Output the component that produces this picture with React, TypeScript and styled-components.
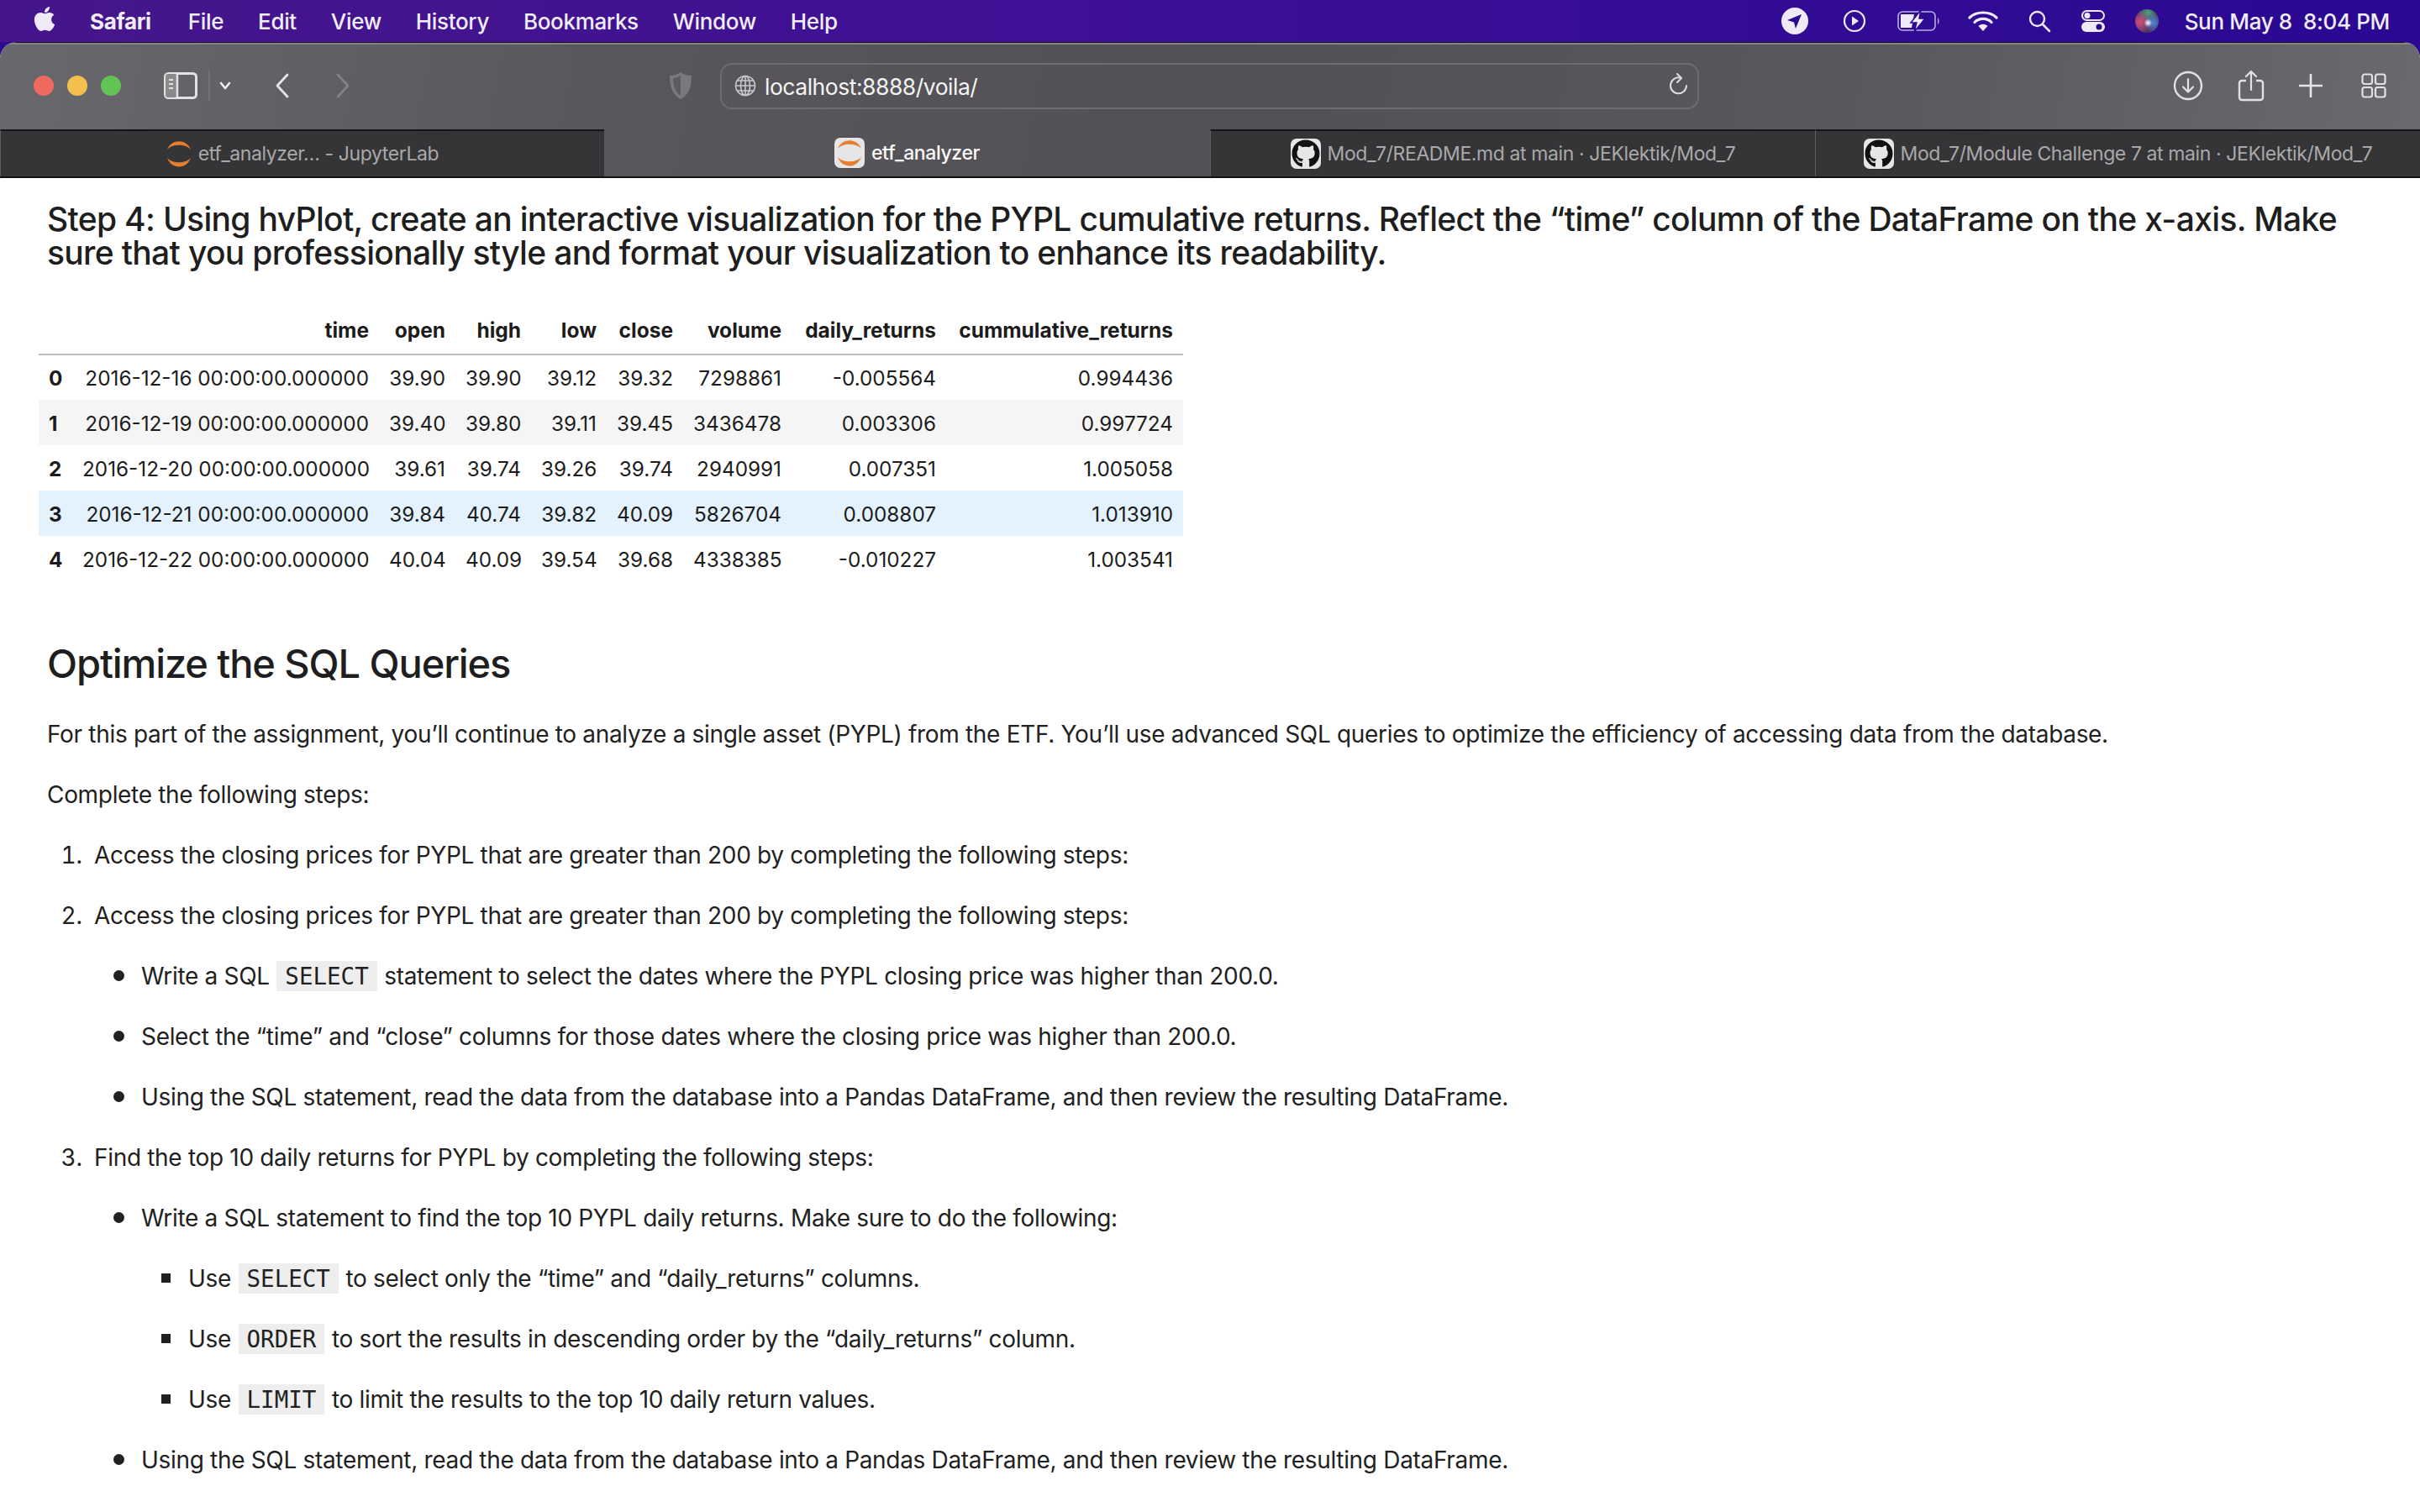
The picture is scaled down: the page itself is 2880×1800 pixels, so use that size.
import styled, { createGlobalStyle } from "styled-components";
import { FaApple, FaGithub } from "react-icons/fa";

const GlobalStyle = createGlobalStyle`
  html, body {
    margin: 0;
    padding: 0;
    background: #fff;
  }
  body {
    width: 2880px;
    height: 1800px;
    overflow: hidden;
    font-family: Inter, "Liberation Sans", sans-serif;
  }
`;

const Screen = styled.div`
  width: 2880px;
  height: 1800px;
  overflow: hidden;
  background: #2c0a90;
  display: flex;
  flex-direction: column;
`;

const MenuBar = styled.header`
  height: 50px;
  flex: none;
  display: flex;
  align-items: center;
  padding: 0 36px 0 38px;
  background: linear-gradient(90deg, #45168a 0%, #3d1096 45%, #2a0892 100%);
  color: #f1edf8;
  font-size: 26px;
  letter-spacing: -0.35px;
`;

const AppleMark = styled.span`
  display: flex;
  width: 30px;
  margin-right: 39px;
  margin-top: -6px;
  font-size: 33px;
  color: #efeaf7;
`;

const MenuItem = styled.span<{ $bold?: boolean }>`
  margin-right: ${(p) => (p.$bold ? 44 : 41)}px;
  font-weight: ${(p) => (p.$bold ? 700 : 500)};
`;

const StatusArea = styled.div`
  margin-left: auto;
  display: flex;
  align-items: center;
`;

const StatusIcon = styled.svg<{ $gap: number }>`
  display: block;
  margin-right: ${(p) => p.$gap}px;
`;

const Clock = styled.span`
  font-weight: 500;
  white-space: pre;
`;

const BrowserWindow = styled.div`
  flex: 1;
  display: flex;
  flex-direction: column;
  min-height: 0;
  border-radius: 20px 20px 0 0;
  overflow: hidden;
  background: #fff;
`;

const Chrome = styled.div`
  flex: none;
  background: linear-gradient(100deg, #69686c 0%, #59575c 25%, #525055 50%, #59575c 75%, #6a696d 100%);
  box-shadow: inset 0 2px 0 #848386;
  border-top: 1px solid #151417;
`;

const Toolbar = styled.div`
  height: 103px;
  box-sizing: border-box;
  display: flex;
  align-items: center;
  padding-bottom: 1px;
`;

const Lights = styled.div`
  display: flex;
  gap: 16px;
  margin-left: 40px;
  margin-right: 51px;
`;

const Light = styled.span<{ $color: string }>`
  width: 24px;
  height: 24px;
  border-radius: 50%;
  background: ${(p) => p.$color};
`;

const ToolIcon = styled.svg<{ $left: number }>`
  display: block;
  flex: none;
  margin-left: ${(p) => p.$left}px;
`;

const UrlBar = styled.div`
  width: 1165px;
  height: 55px;
  box-sizing: border-box;
  flex: none;
  margin-left: 33px;
  border: 2px solid #6d6c70;
  border-radius: 14px;
  display: flex;
  align-items: center;
  padding: 0 10px 0 15px;
  color: #f4f4f5;
  font-size: 26.5px;
  letter-spacing: -0.48px;
`;

const UrlText = styled.span`
  flex: 1;
  margin-left: 10px;
  padding-top: 1px;
`;

const TabStrip = styled.div`
  height: 56px;
  display: grid;
  grid-template-columns: 719px 721px 720px 720px;
  border-bottom: 2px solid #111;
  box-sizing: content-box;
`;

const Tab = styled.div<{ $active?: boolean }>`
  display: flex;
  align-items: center;
  justify-content: center;
  gap: 8px;
  font-size: 23px;
  letter-spacing: -0.4px;
  color: ${(p) => (p.$active ? "#fafafa" : "#a9a9aa")};
  font-weight: ${(p) => (p.$active ? 500 : 400)};
  background: ${(p) => (p.$active ? "transparent" : "#353437")};
  border-top: ${(p) => (p.$active ? "none" : "2px solid #151417")};
  border-left: ${(p) => (p.$active ? "none" : "1px solid #5c5b5e")};
  white-space: nowrap;
`;

const Favicon = styled.span<{ $plain?: boolean }>`
  width: ${(p) => (p.$plain ? "30px" : "36px")};
  height: 36px;
  border-radius: 7px;
  flex: none;
  display: flex;
  align-items: center;
  justify-content: center;
  background: ${(p) => (p.$plain ? "transparent" : "#e6e6e6")};
  color: #111;
  font-size: 34px;
`;

const Page = styled.main`
  flex: 1;
  background: #fff;
  color: #212121;
  padding: 29px 30px 0 56px;
  font-size: 28px;
  line-height: 40px;
  letter-spacing: -0.32px;
`;

const StepHeading = styled.h3`
  margin: 0;
  font-size: 39px;
  line-height: 40px;
  font-weight: 500;
  letter-spacing: -0.68px;
  color: #1e1e1e;
`;

const SectionHeading = styled.h2`
  margin: 70px 0 0;
  font-size: 47px;
  line-height: 56px;
  font-weight: 500;
  letter-spacing: -1.1px;
  color: #1e1e1e;
`;

const Para = styled.p<{ $first?: boolean }>`
  margin: ${(p) => (p.$first ? "36px" : "32px")} 0 0;
`;

const DataTable = styled.table`
  margin: 47px 0 0 -10px;
  border-collapse: collapse;
  table-layout: fixed;
  width: 1362px;
  font-size: 24.3px;
  line-height: 30px;
  letter-spacing: 0;
  color: #1c1c1c;
`;

const HeadCell = styled.th`
  height: 54px;
  box-sizing: border-box;
  padding: 0 12px 3px;
  text-align: right;
  font-size: 24.5px;
  font-weight: 700;
  border-bottom: 2px solid #bdbdbd;
  white-space: nowrap;
`;

const IndexCell = styled.th`
  padding: 1px 0 0 12px;
  text-align: left;
  font-weight: 700;
`;

const Cell = styled.td`
  padding: 1px 12px 0;
  text-align: right;
  white-space: nowrap;
`;

const Row = styled.tr<{ $bg?: string }>`
  height: 54px;
  background: ${(p) => p.$bg ?? "transparent"};
`;

const OrderedList = styled.ol`
  margin: 0;
  padding: 0 0 0 56px;
  & > li::marker {
    content: counter(list-item) ".\\00a0\\00a0";
  }
`;

const BulletList = styled.ul<{ $square?: boolean }>`
  margin: 0;
  padding: 0 0 0 56px;
  list-style: none;
  & > li::before {
    content: "";
    display: inline-block;
    vertical-align: ${(p) => (p.$square ? "5px" : "4px")};
    width: ${(p) => (p.$square ? "11px" : "13px")};
    height: ${(p) => (p.$square ? "11px" : "13px")};
    margin-left: ${(p) => (p.$square ? "-32px" : "-33px")};
    margin-right: ${(p) => (p.$square ? "21px" : "20px")};
    border-radius: ${(p) => (p.$square ? "0" : "50%")};
    background: #212121;
  }
`;

const Item = styled.li`
  margin-top: 32px;
`;

const Code = styled.code`
  font-family: "DejaVu Sans Mono", "Liberation Mono", monospace;
  font-size: 27.5px;
  letter-spacing: 0;
  background: #eee;
  padding: 2px 10px;
  margin: 0 1px;
`;

const rows = [
  ["0", "2016-12-16 00:00:00.000000", "39.90", "39.90", "39.12", "39.32", "7298861", "-0.005564", "0.994436"],
  ["1", "2016-12-19 00:00:00.000000", "39.40", "39.80", "39.11", "39.45", "3436478", "0.003306", "0.997724"],
  ["2", "2016-12-20 00:00:00.000000", "39.61", "39.74", "39.26", "39.74", "2940991", "0.007351", "1.005058"],
  ["3", "2016-12-21 00:00:00.000000", "39.84", "40.74", "39.82", "40.09", "5826704", "0.008807", "1.013910"],
  ["4", "2016-12-22 00:00:00.000000", "40.04", "40.09", "39.54", "39.68", "4338385", "-0.010227", "1.003541"],
];

const columns = ["time", "open", "high", "low", "close", "volume", "daily_returns", "cummulative_returns"];
const colWidths = [40, 365, 91, 90, 90, 91, 129, 184, 282];
const rowColors = [undefined, "#f5f5f5", undefined, "#e3f2fd", undefined];

const JupyterArcs = () => (
  <svg width="30" height="32" viewBox="0 0 30 32">
    <path d="M1 11 C6 -2 24 -2 29 11 C23 4 7 4 1 11 Z" fill="#e67e2f" />
    <path d="M1 21 C7 28 23 28 29 21 C24 35 6 35 1 21 Z" fill="#e67e2f" />
  </svg>
);

const App = () => {
  return (
    <Screen>
      <GlobalStyle />
      <MenuBar>
        <AppleMark>
          <FaApple />
        </AppleMark>
        <MenuItem $bold>Safari</MenuItem>
        <MenuItem>File</MenuItem>
        <MenuItem>Edit</MenuItem>
        <MenuItem>View</MenuItem>
        <MenuItem>History</MenuItem>
        <MenuItem>Bookmarks</MenuItem>
        <MenuItem>Window</MenuItem>
        <MenuItem>Help</MenuItem>
        <StatusArea>
          <StatusIcon $gap={40} width="34" height="34" viewBox="0 0 34 34">
            <circle cx="17" cy="17" r="16" fill="#efeaf8" />
            <path d="M25 9 L8 16 L16 18.5 L18 26 Z" fill="#2c0a90" />
          </StatusIcon>
          <StatusIcon $gap={37} width="28" height="28" viewBox="0 0 28 28">
            <circle cx="14" cy="14" r="12" fill="none" stroke="#efeaf8" strokeWidth="2.2" />
            <path d="M11 8.5 L19 14 L11 19.5 Z" fill="#efeaf8" />
          </StatusIcon>
          <StatusIcon $gap={32} width="52" height="26" viewBox="0 0 52 26">
            <rect x="1" y="2" width="44" height="22" rx="5" fill="none" stroke="#b9aee0" strokeWidth="1.6" />
            <path d="M4 5 H20 L17 21 H4 Z" fill="#efeaf8" />
            <path d="M28 0 L16 15 H23 L20 26 L33 10 H26 Z" fill="#efeaf8" stroke="#2c0a90" strokeWidth="1.5" />
            <path d="M48 9 C50 10 50 16 48 17 Z" fill="#b9aee0" />
          </StatusIcon>
          <StatusIcon $gap={35} width="36" height="26" viewBox="0 0 36 26">
            <path d="M2 9 C10 1 26 1 34 9" fill="none" stroke="#efeaf8" strokeWidth="3.2" strokeLinecap="round" />
            <path d="M8 14.5 C13 9 23 9 28 14.5" fill="none" stroke="#efeaf8" strokeWidth="3.2" strokeLinecap="round" />
            <path d="M12.5 19 L18 25 L23.5 19 C20 16 16 16 12.5 19 Z" fill="#efeaf8" />
          </StatusIcon>
          <StatusIcon $gap={36} width="28" height="28" viewBox="0 0 28 28">
            <circle cx="11.5" cy="11.5" r="8.5" fill="none" stroke="#efeaf8" strokeWidth="2.4" />
            <path d="M18 18 L26 26" stroke="#efeaf8" strokeWidth="2.6" strokeLinecap="round" />
          </StatusIcon>
          <StatusIcon $gap={36} width="28" height="26" viewBox="0 0 28 26">
            <rect x="1" y="1" width="26" height="11" rx="5.5" fill="none" stroke="#efeaf8" strokeWidth="2" />
            <circle cx="7" cy="6.5" r="3.5" fill="#efeaf8" />
            <rect x="0" y="14" width="28" height="12" rx="6" fill="#efeaf8" />
            <circle cx="21" cy="20" r="3.5" fill="#2c0a90" />
          </StatusIcon>
          <StatusIcon $gap={31} width="28" height="30" viewBox="0 0 28 30">
            <defs>
              <radialGradient id="siriGreen" cx="55%" cy="15%" r="45%">
                <stop offset="0%" stopColor="#46a67e" />
                <stop offset="100%" stopColor="#46a67e" stopOpacity="0" />
              </radialGradient>
              <radialGradient id="siriPink" cx="20%" cy="55%" r="50%">
                <stop offset="0%" stopColor="#d8507c" />
                <stop offset="100%" stopColor="#d8507c" stopOpacity="0" />
              </radialGradient>
              <radialGradient id="siriBlue" cx="78%" cy="58%" r="40%">
                <stop offset="0%" stopColor="#4f86e0" />
                <stop offset="100%" stopColor="#4f86e0" stopOpacity="0" />
              </radialGradient>
              <radialGradient id="siriCore" cx="55%" cy="58%" r="18%">
                <stop offset="0%" stopColor="#ffffff" />
                <stop offset="100%" stopColor="#ffffff" stopOpacity="0" />
              </radialGradient>
            </defs>
            <circle cx="14" cy="15" r="14" fill="#4a3560" />
            <circle cx="14" cy="15" r="14" fill="url(#siriGreen)" />
            <circle cx="14" cy="15" r="14" fill="url(#siriPink)" />
            <circle cx="14" cy="15" r="14" fill="url(#siriBlue)" />
            <circle cx="14" cy="15" r="14" fill="url(#siriCore)" />
          </StatusIcon>
          <Clock>Sun May 8  8:04 PM</Clock>
        </StatusArea>
      </MenuBar>
      <BrowserWindow>
        <Chrome>
          <Toolbar>
            <Lights>
              <Light $color="#ee6a5f" />
              <Light $color="#f5bf4f" />
              <Light $color="#61c454" />
            </Lights>
            <ToolIcon $left={0} width="40" height="32" viewBox="0 0 40 32">
              <rect x="1.5" y="1.5" width="37" height="29" rx="4" fill="none" stroke="#e2e2e3" strokeWidth="3" />
              <rect x="2" y="2" width="14" height="28" rx="3" fill="#8a898c" />
              <path d="M16 2 V30" stroke="#e2e2e3" strokeWidth="2.5" />
              <path d="M6 9 H11 M6 14 H11 M6 19 H11" stroke="#e2e2e3" strokeWidth="2" />
            </ToolIcon>
            <ToolIcon $left={13} width="2" height="36" viewBox="0 0 2 36">
              <rect width="1.5" height="36" fill="#77767a" />
            </ToolIcon>
            <ToolIcon $left={11} width="14" height="10" viewBox="0 0 14 10">
              <path d="M2 2 L7 8 L12 2" fill="none" stroke="#eee" strokeWidth="2.6" strokeLinecap="round" strokeLinejoin="round" />
            </ToolIcon>
            <ToolIcon $left={51} width="20" height="30" viewBox="0 0 20 30">
              <path d="M16 2 L4 15 L16 28" fill="none" stroke="#e4e4e5" strokeWidth="2.8" strokeLinecap="round" strokeLinejoin="round" />
            </ToolIcon>
            <ToolIcon $left={52} width="20" height="30" viewBox="0 0 20 30">
              <path d="M4 2 L16 15 L4 28" fill="none" stroke="#828185" strokeWidth="2.8" strokeLinecap="round" strokeLinejoin="round" />
            </ToolIcon>
            <ToolIcon $left={378} width="28" height="34" viewBox="0 0 28 34">
              <path d="M14 1 C10 4 5 5 1 5 C1 18 4 28 14 33 C24 28 27 18 27 5 C23 5 18 4 14 1 Z" fill="#7a797d" />
              <path d="M14 5 C11 7 8 8 5 8 C5 18 8 25 14 29 Z" fill="#5d5b60" />
            </ToolIcon>
            <UrlBar>
              <svg width="26" height="26" viewBox="0 0 26 26" fill="none" stroke="#c9c9ca" strokeWidth="1.6">
                <circle cx="13" cy="13" r="11.5" />
                <ellipse cx="13" cy="13" rx="5.5" ry="11.5" />
                <path d="M13 1.5 V24.5 M1.5 13 H24.5 M3.5 7 H22.5 M3.5 19 H22.5" />
              </svg>
              <UrlText>localhost:8888/voila/</UrlText>
              <svg width="24" height="30" viewBox="0 0 24 30" fill="none" stroke="#dcdcdd" strokeWidth="2" strokeLinecap="round">
                <path d="M15 6 A9.5 9.5 0 1 0 21 15" />
                <path d="M10 1 L15 6 L10 11" strokeLinejoin="round" />
              </svg>
            </UrlBar>
            <ToolIcon $left={564} width="36" height="36" viewBox="0 0 36 36">
              <circle cx="18" cy="18" r="16" fill="none" stroke="#e2e2e3" strokeWidth="2.4" />
              <path d="M18 10 V25 M12 19.5 L18 25.5 L24 19.5" fill="none" stroke="#e2e2e3" strokeWidth="2.2" strokeLinecap="round" strokeLinejoin="round" />
            </ToolIcon>
            <ToolIcon $left={41} width="32" height="38" viewBox="0 0 32 38">
              <path d="M10 13 H5 A3 3 0 0 0 2 16 V33 A3 3 0 0 0 5 36 H27 A3 3 0 0 0 30 33 V16 A3 3 0 0 0 27 13 H22" fill="none" stroke="#e2e2e3" strokeWidth="2.4" />
              <path d="M16 24 V2 M10 8 L16 2 L22 8" fill="none" stroke="#e2e2e3" strokeWidth="2.2" strokeLinecap="round" strokeLinejoin="round" />
            </ToolIcon>
            <ToolIcon $left={41} width="28" height="28" viewBox="0 0 28 28">
              <path d="M14 1 V27 M1 14 H27" stroke="#e6e6e7" strokeWidth="2.6" strokeLinecap="round" />
            </ToolIcon>
            <ToolIcon $left={46} width="30" height="30" viewBox="0 0 30 30" fill="none" stroke="#e2e2e3" strokeWidth="2.2">
              <rect x="1.5" y="1.5" width="11.5" height="11.5" rx="2.5" />
              <rect x="17" y="1.5" width="11.5" height="11.5" rx="2.5" />
              <rect x="1.5" y="17" width="11.5" height="11.5" rx="2.5" />
              <rect x="17" y="17" width="11.5" height="11.5" rx="2.5" />
            </ToolIcon>
          </Toolbar>
          <TabStrip>
            <Tab>
              <Favicon $plain>
                <JupyterArcs />
              </Favicon>
              etf_analyzer… - JupyterLab
            </Tab>
            <Tab $active>
              <Favicon>
                <JupyterArcs />
              </Favicon>
              etf_analyzer
            </Tab>
            <Tab>
              <Favicon>
                <FaGithub />
              </Favicon>
              Mod_7/README.md at main · JEKlektik/Mod_7
            </Tab>
            <Tab>
              <Favicon>
                <FaGithub />
              </Favicon>
              Mod_7/Module Challenge 7 at main · JEKlektik/Mod_7
            </Tab>
          </TabStrip>
        </Chrome>
        <Page>
          <StepHeading>
            Step 4: Using hvPlot, create an interactive visualization for the PYPL cumulative returns. Reflect the “time” column of the DataFrame on the x-axis. Make sure that you professionally style and format your visualization to enhance its readability.
          </StepHeading>
          <DataTable>
            <colgroup>
              {colWidths.map((w, i) => (
                <col key={i} width={w} />
              ))}
            </colgroup>
            <thead>
              <tr>
                <HeadCell />
                {columns.map((c) => (
                  <HeadCell key={c}>{c}</HeadCell>
                ))}
              </tr>
            </thead>
            <tbody>
              {rows.map((r, i) => (
                <Row key={r[0]} $bg={rowColors[i]}>
                  <IndexCell>{r[0]}</IndexCell>
                  {r.slice(1).map((v, j) => (
                    <Cell key={j}>{v}</Cell>
                  ))}
                </Row>
              ))}
            </tbody>
          </DataTable>
          <SectionHeading>Optimize the SQL Queries</SectionHeading>
          <Para $first>
            For this part of the assignment, you’ll continue to analyze a single asset (PYPL) from the ETF. You’ll use advanced SQL queries to optimize the efficiency of accessing data from the database.
          </Para>
          <Para>Complete the following steps:</Para>
          <OrderedList>
            <Item>Access the closing prices for PYPL that are greater than 200 by completing the following steps:</Item>
            <Item>
              Access the closing prices for PYPL that are greater than 200 by completing the following steps:
              <BulletList>
                <Item>
                  Write a SQL <Code>SELECT</Code> statement to select the dates where the PYPL closing price was higher than 200.0.
                </Item>
                <Item>Select the “time” and “close” columns for those dates where the closing price was higher than 200.0.</Item>
                <Item>Using the SQL statement, read the data from the database into a Pandas DataFrame, and then review the resulting DataFrame.</Item>
              </BulletList>
            </Item>
            <Item>
              Find the top 10 daily returns for PYPL by completing the following steps:
              <BulletList>
                <Item>
                  Write a SQL statement to find the top 10 PYPL daily returns. Make sure to do the following:
                  <BulletList $square>
                    <Item>
                      Use <Code>SELECT</Code> to select only the “time” and “daily_returns” columns.
                    </Item>
                    <Item>
                      Use <Code>ORDER</Code> to sort the results in descending order by the “daily_returns” column.
                    </Item>
                    <Item>
                      Use <Code>LIMIT</Code> to limit the results to the top 10 daily return values.
                    </Item>
                  </BulletList>
                </Item>
                <Item>Using the SQL statement, read the data from the database into a Pandas DataFrame, and then review the resulting DataFrame.</Item>
              </BulletList>
            </Item>
          </OrderedList>
        </Page>
      </BrowserWindow>
    </Screen>
  );
};

export default App;
